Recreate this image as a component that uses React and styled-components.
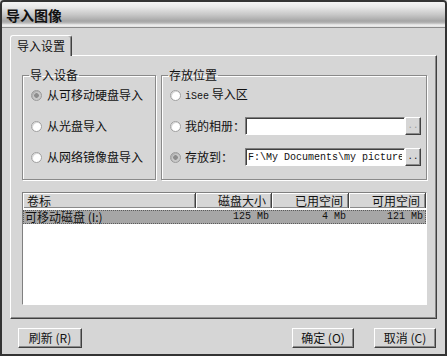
import React from 'react';
import styled, { createGlobalStyle } from 'styled-components';

const cjk = `"Noto Sans CJK SC", "Noto Sans CJK JP", "DejaVu Sans", sans-serif`;
const mono = `"Liberation Mono", "DejaVu Sans Mono", monospace`;

const Global = createGlobalStyle`
  html, body { margin: 0; padding: 0; background: #d6d6d6; }
  body { font-family: ${cjk}; }
  * { box-sizing: border-box; }
`;

const Window = styled.div`
  width: 447px;
  height: 356px;
  display: flex;
  flex-direction: column;
  background: #d6d6d6;
  border: 2px solid #333;
  border-radius: 4px 4px 0 0;
  overflow: hidden;
  font-family: ${cjk};
  font-size: 12px;
  color: #111;
`;

const TitleBar = styled.div`
  height: 26px;
  flex: none;
  display: flex;
  align-items: center;
  padding-left: 4px;
  border-bottom: 1px solid #8c8c8c;
  background: linear-gradient(
    to bottom,
    #f4f4f4 0px,
    #e8e8e8 5px,
    #c6c6c6 13px,
    #a6a6a6 19px,
    #b8b8b8 21px,
    #efefef 23px,
    #e2e2e2 25px
  );
  font-size: 14px;
  font-weight: bold;
  color: #111;
  line-height: 16px;
`;

const Body = styled.div`
  flex: 1;
  display: flex;
  flex-direction: column;
  padding: 7px 8px 6px 8px;
  min-height: 0;
`;

const TabStrip = styled.div`
  display: flex;
  height: 20px;
  flex: none;
`;

const Tab = styled.div`
  position: relative;
  z-index: 1;
  width: 62px;
  height: 21px;
  margin-bottom: -1px;
  background: #d6d6d6;
  border-top: 1px solid #fff;
  border-left: 1px solid #fff;
  border-right: 1px solid #404040;
  border-radius: 3px 3px 0 0;
  box-shadow: inset -1px 0 0 #8a8a8a;
  display: flex;
  align-items: center;
  justify-content: center;
  font-size: 12px;
  line-height: 14px;
`;

const Panel = styled.div`
  flex: 1;
  min-height: 0;
  display: flex;
  flex-direction: column;
  gap: 12px;
  padding: 12px 9px 13px 11px;
  border: 1px solid;
  border-color: #fff #404040 #404040 #fff;
  box-shadow: inset -1px -1px 0 #8a8a8a;
`;

const GroupRow = styled.div`
  display: grid;
  grid-template-columns: 134px 1fr;
  column-gap: 5px;
`;

const Group = styled.fieldset`
  margin: 0;
  min-width: 0;
  padding: 4px 5px 13px 8px;
  border: 1px solid #8a8a8a;
  box-shadow: inset 1px 1px 0 #fff, 1px 1px 0 #fff;
  display: flex;
  flex-direction: column;
  gap: 13px;
`;

const Legend = styled.legend`
  margin-left: -2px;
  padding: 0 1px;
  font-size: 12px;
  line-height: 14px;
  color: #111;
`;

const OptionRow = styled.div`
  display: flex;
  align-items: center;
  height: 18px;
  gap: ${(p) => p.$gap || 5}px;
`;

const Radio = styled.span`
  flex: none;
  width: 11px;
  height: 11px;
  border-radius: 50%;
  border: 1px solid ${(p) => (p.$checked ? '#9a9a9a' : '#a0a0a0')};
  background: ${(p) =>
    p.$checked
      ? 'radial-gradient(circle, #8c8c8c 0 2px, #c8c8c8 2.6px)'
      : '#fff'};
  box-shadow: inset 1px 1px 0 ${(p) => (p.$checked ? '#b0b0b0' : '#d8d8d8')};
`;

const OptionLabel = styled.span`
  flex: none;
  width: ${(p) => (p.$width ? `${p.$width}px` : 'auto')};
  font-size: 12px;
  line-height: 14px;
  white-space: nowrap;
  color: #111;
`;

const Mono = styled.span`
  font-family: ${mono};
  font-size: 10px;
`;

const PathField = styled.input`
  flex: 1;
  min-width: 0;
  height: 18px;
  margin: 0;
  padding: 0 2px;
  border: 1px solid;
  border-color: #808080 #fff #fff #808080;
  box-shadow: inset 1px 1px 0 #404040;
  background: #fff;
  font-family: ${mono};
  font-size: 10px;
  color: #111;
  outline: none;
`;

const BrowseButton = styled.button`
  flex: none;
  width: 16px;
  height: 18px;
  margin: 0;
  padding: 0;
  border: 1px solid;
  border-color: #fff #404040 #404040 #fff;
  box-shadow: inset -1px -1px 0 #8a8a8a;
  background: #d6d6d6;
  font-family: ${mono};
  font-size: 9px;
  line-height: 14px;
  color: ${(p) => (p.disabled ? '#9a9a9a' : '#111')};
`;

const FieldGroup = styled.div`
  flex: 1;
  display: flex;
  min-width: 0;
`;

const List = styled.div`
  flex: 1;
  min-height: 0;
  background: #fff;
  border: 1px solid;
  border-color: #808080 #fff #fff #808080;
  display: flex;
  flex-direction: column;
`;

const columns = '173px 76px 77px 77px';

const Header = styled.div`
  display: grid;
  grid-template-columns: ${columns};
  height: 15px;
  flex: none;
`;

const HeaderCell = styled.div`
  background: #d6d6d6;
  border-right: 1px solid #404040;
  box-shadow: inset 1px 1px 0 #fff, inset -1px -1px 0 #8a8a8a;
  font-size: 12px;
  line-height: 15px;
  text-align: ${(p) => (p.$right ? 'right' : 'left')};
  padding: ${(p) => (p.$right ? '0 5px 0 0' : '0 0 0 4px')};
  white-space: nowrap;
  overflow: hidden;
`;

const Row = styled.div`
  display: grid;
  grid-template-columns: ${columns};
  height: 14px;
  margin-top: 2px;
  background: #a6a6a6;
  border: 1px dotted #5a5a5a;
`;

const Cell = styled.div`
  line-height: 12px;
  white-space: nowrap;
  text-align: ${(p) => (p.$right ? 'right' : 'left')};
  padding: ${(p) => (p.$right ? '0 4px 0 0' : '0 0 0 1px')};
  font-family: ${(p) => (p.$mono ? mono : cjk)};
  font-size: ${(p) => (p.$mono ? '10px' : '12px')};
  color: #111;
`;

const Footer = styled.div`
  flex: none;
  margin-top: 9px;
  height: 20px;
  display: flex;
  align-items: center;
  justify-content: space-between;
  padding: 0 1px 0 8px;
`;

const ButtonGroup = styled.div`
  display: flex;
  gap: 20px;
`;

const DialogButton = styled.button`
  width: ${(p) => p.$width || 62}px;
  height: 20px;
  margin: 0;
  padding: 0;
  border: 1px solid;
  border-color: #fff #404040 #404040 #fff;
  box-shadow: inset -1px -1px 0 #8a8a8a;
  background: #d6d6d6;
  font-family: ${cjk};
  font-size: 12px;
  line-height: 14px;
  color: #111;
`;

export default function App() {
  return (
    <>
      <Global />
      <Window>
        <TitleBar>导入图像</TitleBar>
        <Body>
          <TabStrip>
            <Tab>导入设置</Tab>
          </TabStrip>
          <Panel>
            <GroupRow>
              <Group>
                <Legend>导入设备</Legend>
                <OptionRow>
                  <Radio $checked />
                  <OptionLabel>从可移动硬盘导入</OptionLabel>
                </OptionRow>
                <OptionRow>
                  <Radio />
                  <OptionLabel>从光盘导入</OptionLabel>
                </OptionRow>
                <OptionRow>
                  <Radio />
                  <OptionLabel>从网络镜像盘导入</OptionLabel>
                </OptionRow>
              </Group>
              <Group>
                <Legend>存放位置</Legend>
                <OptionRow $gap={4}>
                  <Radio />
                  <OptionLabel>
                    <Mono>iSee</Mono> 导入区
                  </OptionLabel>
                </OptionRow>
                <OptionRow $gap={4}>
                  <Radio />
                  <OptionLabel $width={56}>我的相册：</OptionLabel>
                  <FieldGroup>
                    <PathField readOnly value="" />
                    <BrowseButton disabled>..</BrowseButton>
                  </FieldGroup>
                </OptionRow>
                <OptionRow $gap={4}>
                  <Radio $checked />
                  <OptionLabel $width={56}>存放到：</OptionLabel>
                  <FieldGroup>
                    <PathField readOnly value={'F:\\My Documents\\my pictures'} />
                    <BrowseButton>..</BrowseButton>
                  </FieldGroup>
                </OptionRow>
              </Group>
            </GroupRow>
            <List>
              <Header>
                <HeaderCell>卷标</HeaderCell>
                <HeaderCell $right>磁盘大小</HeaderCell>
                <HeaderCell $right>已用空间</HeaderCell>
                <HeaderCell $right>可用空间</HeaderCell>
              </Header>
              <Row>
                <Cell>可移动磁盘 (I:)</Cell>
                <Cell $right $mono>125 Mb</Cell>
                <Cell $right $mono>4 Mb</Cell>
                <Cell $right $mono>121 Mb</Cell>
              </Row>
            </List>
          </Panel>
          <Footer>
            <DialogButton $width={64}>刷新 (R)</DialogButton>
            <ButtonGroup>
              <DialogButton>确定 (O)</DialogButton>
              <DialogButton>取消 (C)</DialogButton>
            </ButtonGroup>
          </Footer>
        </Body>
      </Window>
    </>
  );
}
